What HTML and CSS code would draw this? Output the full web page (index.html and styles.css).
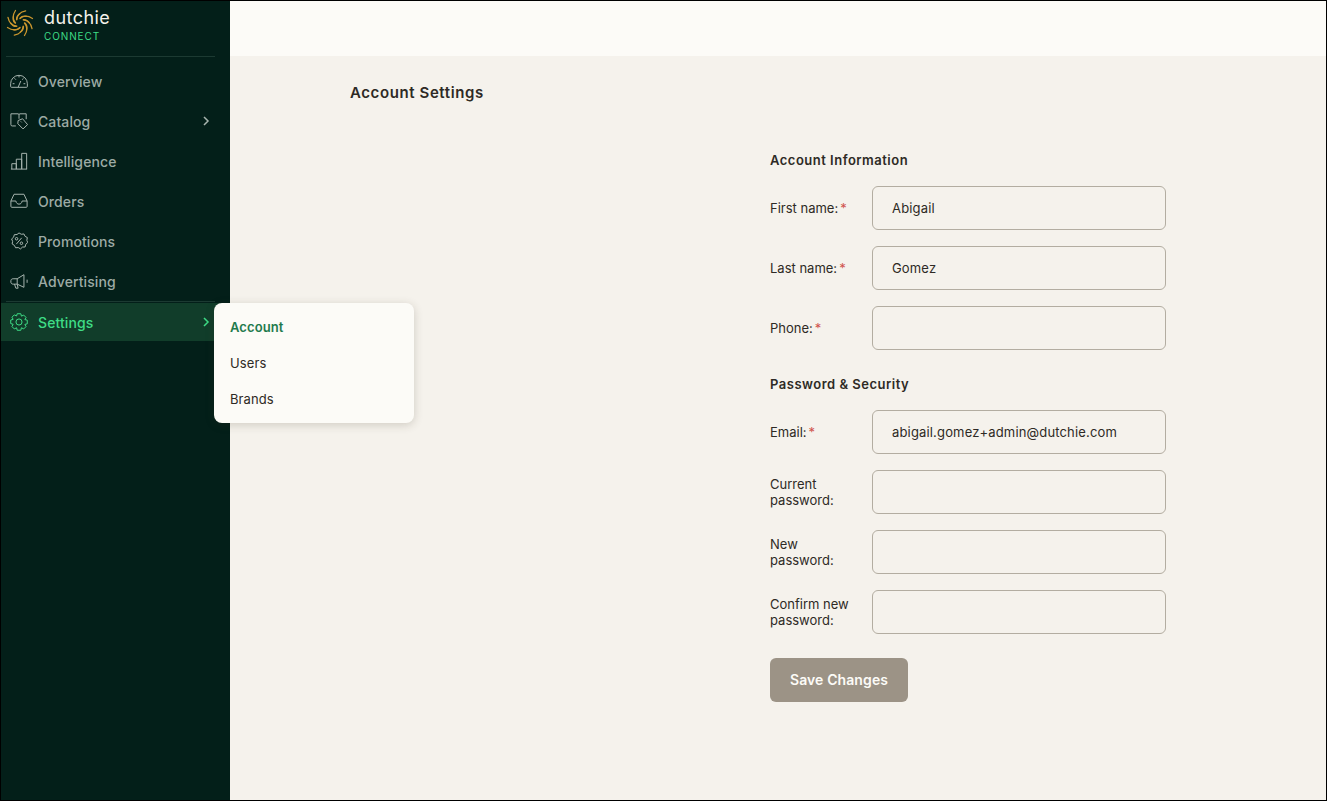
FILE: index.html
```html
<!DOCTYPE html>
<html lang="en">

<head>
    <meta charset="UTF-8">
    <meta name="viewport" content="width=device-width, initial-scale=1.0">
    <title>Account Settings</title>
    <link rel="stylesheet" href="styles.css">
</head>

<body>
    <div class="app">

        <!-- sidebar -->
        <aside class="sidebar">
            <div class="brand">
                <svg class="brand-logo" viewBox="0 0 28 28" width="28" height="28">
                    <defs>
                        <path id="swirl" d="M14 9.500C17.500 6.500 22 6.500 26.500 9.500" />
                        <path id="swirl-in" d="M16 9.500C18 8.500 20.500 9 22.500 10.500" />
                    </defs>
                    <g fill="none" stroke="#c9962f" stroke-width="1.3" stroke-linecap="round">
                        <use href="#swirl" />
                        <use href="#swirl" transform="rotate(45 14 14)" />
                        <use href="#swirl" transform="rotate(90 14 14)" />
                        <use href="#swirl" transform="rotate(135 14 14)" />
                        <use href="#swirl" transform="rotate(180 14 14)" />
                        <use href="#swirl" transform="rotate(225 14 14)" />
                        <use href="#swirl" transform="rotate(270 14 14)" />
                        <use href="#swirl" transform="rotate(315 14 14)" />
                        <use href="#swirl-in" transform="rotate(22 14 14)" />
                        <use href="#swirl-in" transform="rotate(67 14 14)" />
                        <use href="#swirl-in" transform="rotate(112 14 14)" />
                        <use href="#swirl-in" transform="rotate(157 14 14)" />
                        <use href="#swirl-in" transform="rotate(202 14 14)" />
                        <use href="#swirl-in" transform="rotate(247 14 14)" />
                        <use href="#swirl-in" transform="rotate(292 14 14)" />
                        <use href="#swirl-in" transform="rotate(337 14 14)" />
                    </g>
                </svg>
                <div class="brand-text">
                    <span class="brand-name">dutchie</span>
                    <span class="brand-sub">CONNECT</span>
                </div>
            </div>

            <nav class="nav">
                <a class="nav-item">
                    <svg class="nav-icon" viewBox="0 0 20 20">
                        <path d="M1.500 17h17c.5 0 .8-.3.8-1v-3a9.300 9.300 0 0 0-18.600 0v3c0 .7.300 1 .8 1z" />
                        <path d="M9 17l3-7M5 7l1.500 1.500M10 4v2M15 7l-1.500 1.500M3 13h2M15 13h2" />
                    </svg>
                    <span>Overview</span>
                </a>
                <a class="nav-item">
                    <svg class="nav-icon" viewBox="0 0 20 20">
                        <path d="M6.500 15.500H2.500c-1 0-1.500-.5-1.500-1.500V2h8c.6 0 1 .3 1 1 0-.7.4-1 1-1h7v6" />
                        <path d="M10 3v4.500" />
                        <path d="M9 9.500l5-2 5.500 6.500-5 4.800-5.800-5.800z" />
                        <path d="M12 10.500l1 1" />
                    </svg>
                    <span>Catalog</span>
                    <svg class="nav-arrow" viewBox="0 0 8 12"><path d="M2 2l4 4-4 4" /></svg>
                </a>
                <a class="nav-item">
                    <svg class="nav-icon" viewBox="0 0 20 20">
                        <path d="M1 19h18M2 19v-6h5v6M7 19V8h6v11M13 19V1.500h5.500V19" />
                    </svg>
                    <span>Intelligence</span>
                </a>
                <a class="nav-item">
                    <svg class="nav-icon" viewBox="0 0 20 20">
                        <path d="M1 10l3.500-7.500h11L19 10v6c0 .7-.4 1-1 1H2c-.6 0-1-.3-1-1z" />
                        <path d="M1 10h5.500c.4 2.300 1.700 3.500 3.500 3.500s3.100-1.200 3.500-3.500H19" />
                    </svg>
                    <span>Orders</span>
                </a>
                <a class="nav-item">
                    <svg class="nav-icon" viewBox="0 0 20 20">
                        <path d="M10 1l2.500 1.500 3-.3 1.200 2.600 2.600 1.400-.6 3 1 2.500-2.200 2-.7 2.900-3 .2-2.100 2-2.500-1.500-3 .2-1.300-2.600-2.500-1.600.5-2.900-1.100-2.700 2.200-1.900.8-2.800 3-.2z" />
                        <path d="M7 13.500l6-7" />
                        <circle cx="7.300" cy="7.500" r="1.400" />
                        <circle cx="12.700" cy="12.500" r="1.400" />
                    </svg>
                    <span>Promotions</span>
                </a>
                <a class="nav-item">
                    <svg class="nav-icon" viewBox="0 0 20 20">
                        <path d="M15.500 3v14L8 13.500H3.500c-1.500 0-2.500-1-2.500-2v-2c0-1 1-2 2.500-2H8z" />
                        <path d="M5 13.500l1.500 4.500h2.500l-1-4.500M8 7.500v6M19 8.500v3.500" />
                    </svg>
                    <span>Advertising</span>
                </a>
                <a class="nav-item nav-item-active">
                    <svg class="nav-icon" viewBox="0 0 20 20">
                        <path d="M8 .8h4l.7 2.700 2.500-1.200 2.600 2.600-1.300 2.400 2.700.7v4l-2.700.7 1.300 2.400-2.600 2.600-2.500-1.300-.7 2.800H8l-.7-2.800-2.500 1.300-2.600-2.600L3.500 12.500l-2.700-.7v-4l2.700-.7-1.300-2.400 2.600-2.600 2.500 1.200z" />
                        <circle cx="10" cy="10" r="3.400" />
                    </svg>
                    <span>Settings</span>
                    <svg class="nav-arrow" viewBox="0 0 8 12"><path d="M2 2l4 4-4 4" /></svg>
                </a>
            </nav>

            <!-- flyout for settings -->
            <div class="flyout">
                <a class="flyout-item flyout-item-active">Account</a>
                <a class="flyout-item">Users</a>
                <a class="flyout-item">Brands</a>
            </div>
        </aside>

        <main class="main">
            <header class="topbar"></header>

            <div class="content">
                <h1 class="page-title">Account Settings</h1>

                <form class="form">
                    <h2 class="form-heading">Account Information</h2>
                    <div class="form-row">
                        <label class="form-label">First name:<span class="req">*</span></label>
                        <input class="form-input" type="text" value="Abigail">
                    </div>
                    <div class="form-row">
                        <label class="form-label">Last name:<span class="req">*</span></label>
                        <input class="form-input" type="text" value="Gomez">
                    </div>
                    <div class="form-row">
                        <label class="form-label">Phone:<span class="req">*</span></label>
                        <input class="form-input" type="text">
                    </div>

                    <h2 class="form-heading form-heading-second">Password &amp; Security</h2>
                    <div class="form-row">
                        <label class="form-label">Email:<span class="req">*</span></label>
                        <input class="form-input" type="text" value="abigail.gomez+admin@dutchie.com">
                    </div>
                    <div class="form-row">
                        <label class="form-label">Current password:</label>
                        <input class="form-input" type="password">
                    </div>
                    <div class="form-row">
                        <label class="form-label">New password:</label>
                        <input class="form-input" type="password">
                    </div>
                    <div class="form-row">
                        <label class="form-label">Confirm new password:</label>
                        <input class="form-input" type="password">
                    </div>

                    <button class="save-btn" type="button">Save Changes</button>
                </form>
            </div>
        </main>

    </div>
</body>

</html>
```

FILE: styles.css
```css
* {
    box-sizing: border-box;
}

body {
    margin: 0;
    padding: 0;
    font-family: Inter, "Liberation Sans", sans-serif;
    color: #2e2a25;
}

.app {
    display: flex;
    width: 1327px;
    height: 801px;
    border: 1px solid #000;
    overflow: hidden;
}

/* sidebar */
.sidebar {
    position: relative;
    flex: 0 0 229px;
    background-color: #031f19;
}

.brand {
    display: flex;
    align-items: center;
    gap: 10px;
    height: 56px;
    margin: 0 15px 0 5px;
    padding-bottom: 7px;
    border-bottom: 1px solid #1c3a32;
}

.brand-logo {
    flex: none;
    margin-bottom: 4px;
}

.brand-text {
    display: flex;
    flex-direction: column;
}

.brand-name {
    color: #f4f1ea;
    font-size: 18px;
    line-height: 22px;
    letter-spacing: 0.45px;
}

.brand-sub {
    color: #3edc86;
    font-size: 10px;
    line-height: 14px;
    letter-spacing: 0.9px;
}

.nav {
    display: flex;
    flex-direction: column;
    padding-top: 4px;
}

.nav-item {
    display: flex;
    align-items: center;
    height: 40px;
    padding: 0 20px 0 9px;
    color: #9dabA5;
    font-size: 14px;
    font-weight: 500;
    letter-spacing: 0.1px;
}

.nav-icon {
    flex: none;
    width: 18px;
    height: 18px;
    margin-right: 10px;
    fill: none;
    stroke: #a8b5af;
    stroke-width: 1.1;
}

.nav-arrow {
    flex: none;
    width: 8px;
    height: 12px;
    margin-left: auto;
    fill: none;
    stroke: #a8b5af;
    stroke-width: 1.5;
}

.nav-item-active {
    position: relative;
    height: 38px;
    margin-top: 2px;
    background-color: #113d2a;
    color: #3edc86;
}

.nav-item-active::before {
    content: "";
    position: absolute;
    left: 5px;
    right: 15px;
    top: -2px;
    border-top: 1px solid #1c3a32;
}

.nav-item-active .nav-icon,
.nav-item-active .nav-arrow {
    stroke: #3edc86;
}

.flyout {
    position: absolute;
    left: 213px;
    top: 302px;
    z-index: 5;
    width: 200px;
    height: 120px;
    padding: 6px 0;
    background-color: #fcfbf7;
    border-radius: 8px;
    box-shadow: 0 2px 10px rgba(60, 50, 30, 0.2);
}

.flyout-item {
    display: block;
    height: 36px;
    padding-left: 16px;
    font-size: 13px;
    line-height: 36px;
    letter-spacing: 0.1px;
    color: #2e2a25;
}

.flyout-item-active {
    color: #1f7a4d;
    font-weight: 600;
}

/* main area */
.main {
    flex: 1;
    display: flex;
    flex-direction: column;
    background-color: #f5f2ec;
}

.topbar {
    flex: 0 0 55px;
    background-color: #fcfbf7;
}

.content {
    position: relative;
    flex: 1;
    padding: 28px 0 0 120px;
}

.page-title {
    margin: 0;
    font-size: 15px;
    line-height: 18px;
    font-weight: 600;
    letter-spacing: 0.6px;
}

.form {
    width: 396px;
    margin: 50px 0 0 420px;
}

.form-heading {
    margin: 0 0 18px;
    font-size: 13px;
    line-height: 16px;
    font-weight: 600;
    letter-spacing: 0.5px;
}

.form-heading-second {
    margin-top: 26px;
}

.form-row {
    display: flex;
    align-items: center;
    margin-bottom: 16px;
}

.form-label {
    flex: 0 0 102px;
    padding-right: 10px;
    font-size: 13px;
    line-height: 16px;
}

.req {
    margin-left: 2px;
    color: #d0534c;
}

.form-input {
    flex: 1;
    height: 44px;
    padding: 0 19px;
    background: transparent;
    border: 1px solid #b3ada1;
    border-radius: 6px;
    font-family: inherit;
    font-size: 13px;
    letter-spacing: 0.16px;
    color: #2e2a25;
}

.save-btn {
    display: block;
    width: 138px;
    height: 44px;
    margin-top: 24px;
    padding: 0 0 2px;
    background-color: #9c9386;
    border: none;
    border-radius: 6px;
    color: #fcfbf7;
    font-family: inherit;
    font-size: 14px;
    font-weight: 600;
    letter-spacing: 0.1px;
}
```
